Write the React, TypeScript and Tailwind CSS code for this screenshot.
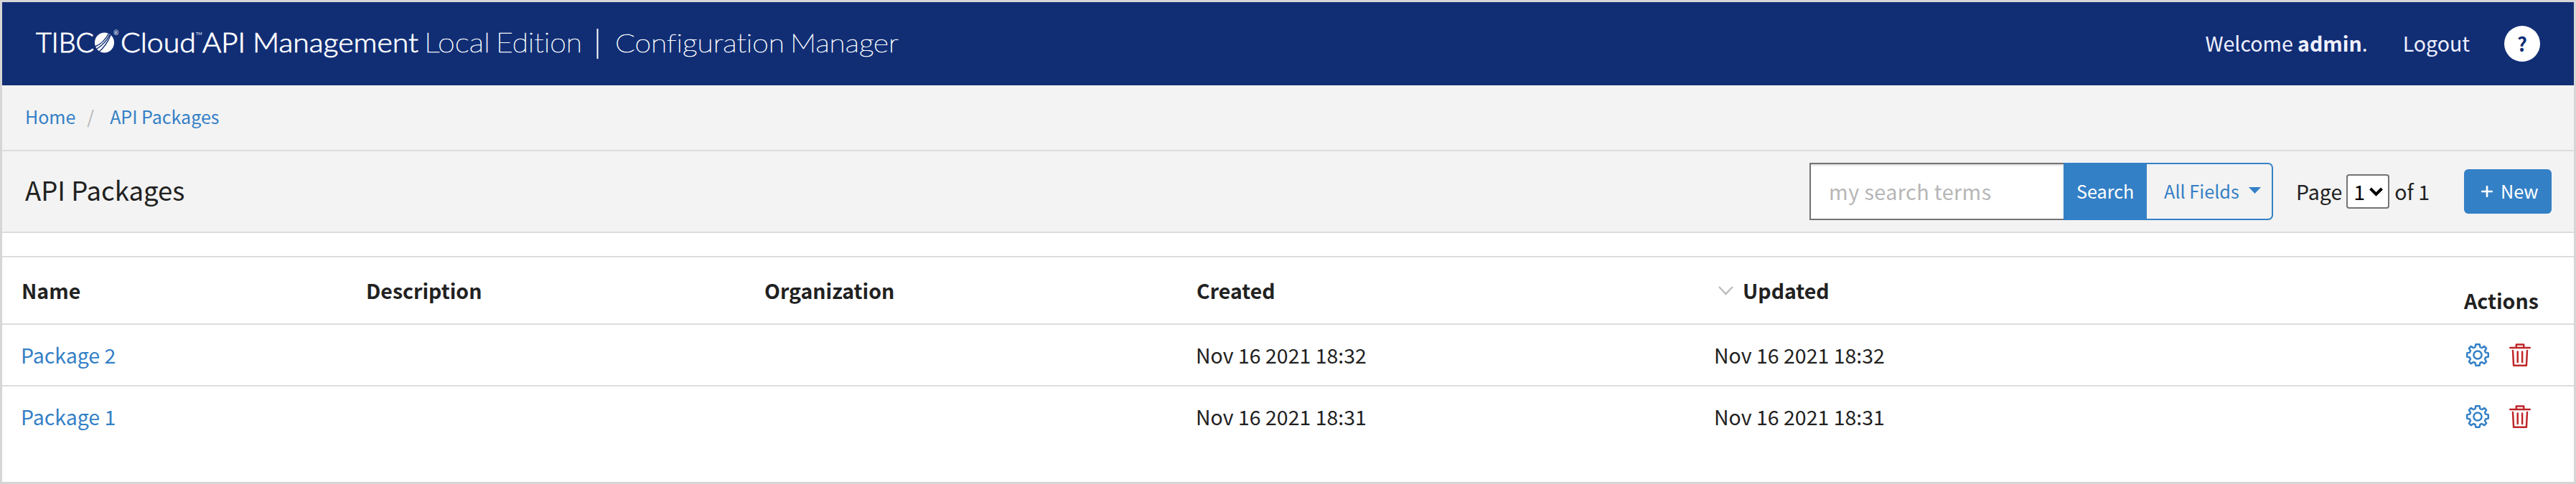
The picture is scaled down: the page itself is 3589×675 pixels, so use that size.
import type { ReactNode } from "react";

const CONTENT = [
  { name: "Package 2", created: "Nov 16 2021 18:32", updated: "Nov 16 2021 18:32" },
  { name: "Package 1", created: "Nov 16 2021 18:31", updated: "Nov 16 2021 18:31" },
];

function LogoText({ x, w, size, thin, stroke = 0.9, children }: { x: number; w: number; size: number; thin?: boolean; stroke?: number; children: ReactNode }) {
  return (
    <text x={x} y={73} fontSize={size} fontWeight={thin ? 100 : 300} stroke="#fff" strokeWidth={thin ? 0.7 : stroke} textLength={w} lengthAdjust="spacingAndGlyphs">
      {children}
    </text>
  );
}

function Logo() {
  return (
    <svg width="1260" height="116" viewBox="3 3 1260 116" fill="#fff" fontFamily="Lato, sans-serif" className="shrink-0 [font-variant-ligatures:none]">
      <LogoText x={50} w={81} size={37.5}>TIBC</LogoText>
      <ellipse cx="145.5" cy="59.5" rx="13.5" ry="14" />
      <path d="M131.5 65.5Q145 60 151.5 46.5M133 69.5Q147 61 153 48M136.5 73.5Q149 63 154 49" fill="none" stroke="#112e75" strokeWidth="1.4" />
      <text x="158" y="49" fontSize="9">®</text>
      <LogoText x={168} w={105} size={37.5} stroke={0.8}>Cloud</LogoText>
      <text x="273" y="49" fontSize="5.5">TM</text>
      <LogoText x={282} w={60} size={37.5}>API</LogoText>
      <LogoText x={352} w={231} size={37.5} stroke={0.7}>Management</LogoText>
      <LogoText x={591} w={92} size={37.5} thin>Local</LogoText>
      <LogoText x={691} w={120} size={37.5} thin>Edition</LogoText>
      <rect x="831.5" y="40" width="2" height="42" />
      <LogoText x={857} w={236} size={35} thin>Configuration</LogoText>
      <LogoText x={1101} w={151} size={35} thin>Manager</LogoText>
    </svg>
  );
}

function GearIcon() {
  return (
    <svg width="32" height="32" viewBox="0 0 32 32" fill="none" stroke="#3480c6" strokeWidth="2.5" strokeLinejoin="round">
      <circle cx="16" cy="16" r="5.6" />
      <path d="M13.4 1.2h5.2l.9 3.9 2.4 1 3.4-2.1 2.8 2.8-2.1 3.4 1 2.4 3.8.8v5.2l-3.8.9-1 2.4 2.1 3.4-2.8 2.8-3.4-2.1-2.4 1-.9 3.8h-5.2l-.9-3.8-2.4-1-3.4 2.1-2.8-2.8 2.1-3.4-1-2.4-3.8-.9v-5.2l3.8-.8 1-2.4-2.1-3.4 2.8-2.8 3.4 2.1 2.4-1z" />
    </svg>
  );
}

function TrashIcon() {
  return (
    <svg width="30" height="32" viewBox="0 0 30 32" fill="none" stroke="#bf2629" strokeWidth="2.5" strokeLinecap="round" strokeLinejoin="round">
      <path d="M1.3 6H28.7M9.8 5.5V1.4H20.2V5.5M5 10l1.1 20.7H23.9L25 10M11.7 11.5V26M18.1 11.5V26" />
    </svg>
  );
}

const GRID = "grid grid-cols-[480px_555px_602px_721px_1fr_153px]";

export default function App() {
  return (
    <div className="flex h-[675px] w-[3589px] flex-col border-[3px] border-[#d6d6d6] bg-white font-['Noto_Sans_CJK_SC',sans-serif] text-[28.5px] leading-[40px] whitespace-nowrap text-[#212121]">
      <header className="flex h-[116px] shrink-0 items-center bg-[#112e75] text-[#f0f0ff]">
        <Logo />
        <div className="ml-auto flex items-center pr-[47px]">
          <span className="mb-[2px]">Welcome <b>admin</b>.</span>
          <span className="mb-[2px] ml-[49px]">Logout</span>
          <span className="ml-[48px] flex size-[50px] items-center justify-center rounded-full bg-white text-[27px] font-bold text-[#112e75]">?</span>
        </div>
      </header>

      <nav className="flex h-[92px] shrink-0 items-center border-b-2 border-[#dddddd] bg-[#f3f3f3] pb-[5px] pl-[32px] text-[25px] text-[#3480c6]">
        <a>Home</a>
        <span className="ml-[16px] text-[#b5b5b5]">/</span>
        <a className="ml-[22px]">API Packages</a>
      </nav>

      <section className="flex h-[114px] shrink-0 items-center border-b-2 border-[#dddddd] bg-[#f3f3f3] pl-[32px]">
        <h1 className="mb-[4px] text-[36.5px] leading-[50px]">API Packages</h1>
        <div className="ml-auto flex items-center pr-[31px]">
          <div className="flex h-[80px] text-[25.2px]">
            <div className="flex w-[354px] items-center border-2 border-r-0 border-[#737373] bg-white pb-[1px] pl-[25px] text-[28.8px] tracking-[0.4px] text-[#b6b6b6] shadow-[inset_0_2px_2px_#e4e0e0]">my search terms</div>
            <button className="w-[116px] bg-[#3480c6] pb-[2px] text-white">Search</button>
            <button className="flex w-[176px] items-center rounded-r-[7px] border-2 border-l-0 border-[#3480c6] pb-[2px] pl-[24px] text-[#3480c6]">
              All Fields
              <svg className="mb-[2px] ml-[13px]" width="17" height="9" viewBox="0 0 17 9"><path d="M0 0H17L8.5 9z" fill="#3480c6" /></svg>
            </button>
          </div>
          <span className="ml-[32px]">Page</span>
          <span className="ml-[6px] flex h-[48px] w-[60px] items-center rounded-[4px] border-2 border-[#737373] bg-white pl-[8px] text-black">
            1
            <svg className="ml-[6px]" width="19" height="13" viewBox="0 0 19 13" fill="none" stroke="#000" strokeWidth="4"><path d="M1.5 2L9.5 10L17.5 2" /></svg>
          </span>
          <span className="ml-[7px]">of 1</span>
          <button className="ml-[48px] flex h-[62px] w-[122px] items-center rounded-[6px] bg-[#3480c6] pl-[24px] text-[25.2px] text-white">
            <svg width="16" height="16" viewBox="0 0 16 16" stroke="#fff" strokeWidth="2.7" strokeLinecap="round"><path d="M8 1.2V14.8M1.2 8H14.8" /></svg>
            <span className="mb-[2px] ml-[11px]">New</span>
          </button>
        </div>
      </section>

      <main className="mt-[32px] border-t-2 border-[#dddddd]">
        <div className={`${GRID} h-[94px] items-center border-b-2 border-[#dddddd] pl-[27px] font-bold`}>
          <span>Name</span>
          <span>Description</span>
          <span>Organization</span>
          <span>Created</span>
          <span className="flex items-center">
            <svg className="mr-[13px] ml-[6px]" width="21" height="13" viewBox="0 0 21 13" fill="none" stroke="#bbb" strokeWidth="2.4"><path d="M1 1L10.5 11L20 1" /></svg>
            Updated
          </span>
          <span className="pt-[27px]">Actions</span>
        </div>
        {CONTENT.map((row, i) => (
          <div key={row.name} className={`${GRID} h-[86px] items-center pl-[27px] ${i === 0 ? "border-b-2 border-[#dddddd]" : "pb-[2px]"}`}>
            <a className="-ml-[1px] text-[#3480c6]">{row.name}</a>
            <span />
            <span />
            <span className="-ml-[1px]">{row.created}</span>
            <span>{row.updated}</span>
            <span className="flex items-center gap-[28px] pl-[3px]">
              <GearIcon />
              <TrashIcon />
            </span>
          </div>
        ))}
      </main>
    </div>
  );
}
